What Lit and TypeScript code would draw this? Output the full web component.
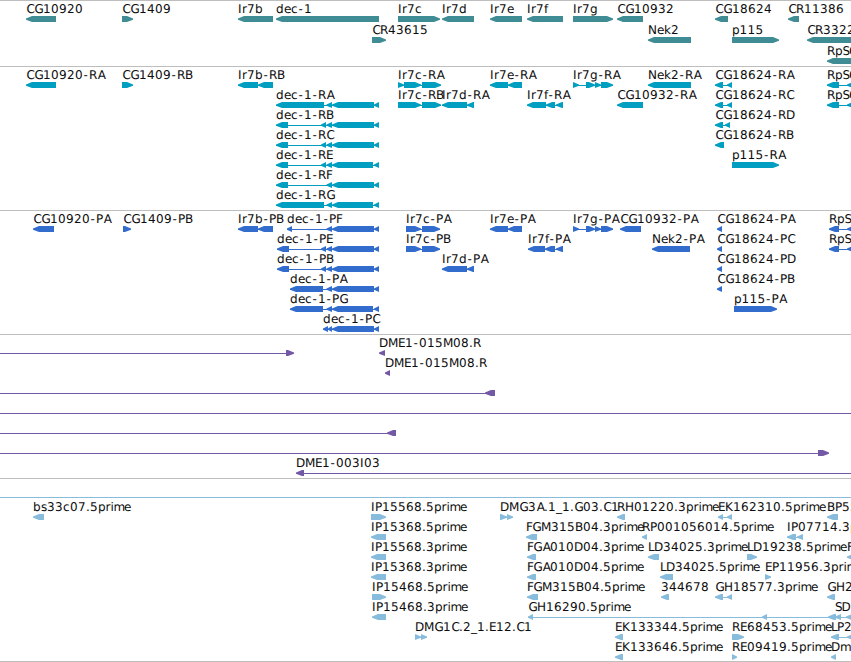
import { LitElement, html, svg, css } from "lit";
import { customElement, property } from "lit/decorators.js";

/** row, label, direction, blocks [start, end], optional connector span */
type Feature = [number, string, "L" | "R", number[][], number[]?];

interface Track {
  name: string;
  height: number;
  pitch: number;
  features: Feature[];
}

const WIDTH = 851;

// Glyph advances for the 12px label face.
const ADVANCE: Record<string, number> = {
  A: 8, B: 8, C: 8, D: 9, E: 7, F: 6, G: 9, H: 9, I: 4, K: 8, L: 6, M: 10, N: 9, P: 7, R: 8, S: 6.5,
  b: 8, c: 7, d: 8, e: 7, f: 4, g: 8, i: 3, k: 7, m: 10.5, p: 7.5, r: 5, s: 6, ".": 4, "-": 6, _: 6,
};

// Extra left bearing for the round and slanted capitals, and the centred hyphen.
const BEARING: Record<string, number> = { A: 0.75, C: 0.5, G: 0.5, "-": 0.5 };

const DEC_TAIL = [[326.5, 332], [332, 374], [374, 379]];
const DEC_TAIL_GAP = [[326.5, 332], [332, 373], [374, 379]];
const IR7G = [[573, 579], [586, 595], [595, 601], [601, 613]];

const TRACKS: Track[] = [
  {
    name: "gene", height: 66, pitch: 21,
    features: [
      [0, "CG10920", "L", [[26, 56]]],
      [0, "CG1409", "R", [[122, 133]]],
      [0, "Ir7b", "L", [[238, 273]]],
      [0, "dec-1", "L", [[276, 379]]],
      [0, "Ir7c", "R", [[398, 440]]],
      [0, "Ir7d", "L", [[442, 474]]],
      [0, "Ir7e", "L", [[490, 522]]],
      [0, "Ir7f", "L", [[527, 563]]],
      [0, "Ir7g", "R", [[573, 613]]],
      [0, "CG10932", "L", [[617, 643]]],
      [0, "CG18624", "L", [[715, 728]]],
      [0, "CR11386", "L", [[788, 799]]],
      [1, "CR43615", "R", [[372, 386]]],
      [1, "Nek2", "L", [[648, 691]]],
      [1, "p115", "R", [[732, 779]]],
      [1, "CR33222", "L", [[807, 870]]],
      [2, "RpS6", "L", [[827, 870]]],
    ],
  },
  {
    name: "transcript", height: 144, pitch: 20,
    features: [
      [0, "CG10920-RA", "L", [[26, 56]]],
      [0, "CG1409-RB", "R", [[122, 133]]],
      [0, "Ir7b-RB", "L", [[238, 258], [258, 273]]],
      [1, "dec-1-RA", "L", [[276, 324], ...DEC_TAIL]],
      [2, "dec-1-RB", "L", [[276, 288], [321, 326], ...DEC_TAIL]],
      [3, "dec-1-RC", "L", [[276, 288], [321, 326], ...DEC_TAIL]],
      [4, "dec-1-RE", "L", [[276, 288], [321, 326], ...DEC_TAIL_GAP]],
      [5, "dec-1-RF", "L", [[276, 288], ...DEC_TAIL]],
      [6, "dec-1-RG", "L", [[276, 324], ...DEC_TAIL_GAP]],
      [0, "Ir7c-RA", "R", [[398, 404], [404, 421], [422, 441]]],
      [1, "Ir7c-RB", "R", [[398, 421], [422, 441]]],
      [1, "Ir7d-RA", "L", [[442, 467], [467, 474]]],
      [0, "Ir7e-RA", "L", [[490, 508], [508, 522]]],
      [1, "Ir7f-RA", "L", [[527, 546], [546, 555], [556, 563]]],
      [0, "Ir7g-RA", "R", IR7G],
      [1, "CG10932-RA", "L", [[617, 643]]],
      [0, "Nek2-RA", "L", [[648, 691]]],
      [0, "CG18624-RA", "L", [[715, 723], [727, 732]]],
      [1, "CG18624-RC", "L", [[715, 723], [727, 732]]],
      [2, "CG18624-RD", "L", [[715, 723], [725, 730]]],
      [3, "CG18624-RB", "L", [[715, 724]]],
      [4, "p115-RA", "R", [[732, 779]]],
      [0, "RpS6-RB", "L", [[827, 839], [847, 870]]],
      [1, "RpS6-RA", "L", [[827, 839], [847, 870]]],
    ],
  },
  {
    name: "protein", height: 124, pitch: 20,
    features: [
      [0, "CG10920-PA", "L", [[33, 54]]],
      [0, "CG1409-PB", "R", [[123, 131]]],
      [0, "Ir7b-PB", "L", [[238, 258], [258, 273]]],
      [0, "dec-1-PF", "L", [[287, 292], ...DEC_TAIL]],
      [1, "dec-1-PE", "L", [[277, 289], [321, 326], ...DEC_TAIL]],
      [2, "dec-1-PB", "L", [[277, 289], [321, 326], ...DEC_TAIL]],
      [3, "dec-1-PA", "L", [[290, 323], ...DEC_TAIL]],
      [4, "dec-1-PG", "L", [[290, 323], ...DEC_TAIL_GAP]],
      [5, "dec-1-PC", "L", [[323, 328], [328, 332], [332, 374], [374, 379]]],
      [0, "Ir7c-PA", "R", [[406, 421], [422, 440]]],
      [1, "Ir7c-PB", "R", [[406, 421], [422, 440]]],
      [2, "Ir7d-PA", "L", [[442, 467], [467, 474]]],
      [0, "Ir7e-PA", "L", [[490, 508], [508, 522]]],
      [1, "Ir7f-PA", "L", [[528, 545], [545, 555], [556, 563]]],
      [0, "Ir7g-PA", "R", IR7G],
      [0, "CG10932-PA", "L", [[620, 641]]],
      [1, "Nek2-PA", "L", [[652, 690]]],
      [0, "CG18624-PA", "L", [[717, 722]]],
      [1, "CG18624-PC", "L", [[717, 722]]],
      [2, "CG18624-PD", "L", [[717, 722]]],
      [3, "CG18624-PB", "L", [[717, 722]]],
      [4, "p115-PA", "R", [[734, 777]]],
      [0, "RpS6-PB", "L", [[829, 839], [847, 870]]],
      [1, "RpS6-PA", "L", [[829, 839], [847, 870]]],
    ],
  },
  {
    name: "bac", height: 144, pitch: 20,
    features: [
      [0, "", "R", [[286, 294]], [0, 286]],
      [0, "DME1-015M08.R", "L", [[379, 385]]],
      [1, "DME1-015M08.R", "L", [[385, 390]]],
      [2, "", "L", [[485, 495]], [0, 486]],
      [3, "", "L", [], [0, WIDTH]],
      [4, "", "L", [[387, 396]], [0, 388]],
      [5, "", "R", [[818, 829]], [0, 818]],
      [6, "DME1-003I03", "L", [[296, 304]], [304, WIDTH]],
    ],
  },
  {
    name: "est", height: 183, pitch: 20,
    features: [
      [0, "", "L", [], [0, WIDTH]],
      [1, "bs33c07.5prime", "L", [[33, 44]]],
      [1, "IP15568.5prime", "R", [[371, 386]]],
      [1, "DMG3A.1_1.G03.C1", "R", [[500, 507], [507, 513]]],
      [1, "RH01220.3prime", "L", [[617, 625]]],
      [1, "EK162310.5prime", "L", [[718, 723], [727, 732]]],
      [1, "BP551284.5prime", "L", [[827, 838]]],
      [2, "IP15368.5prime", "L", [[371, 386]]],
      [2, "FGM315B04.3prime", "L", [[526, 537]]],
      [2, "RP001056014.5prime", "L", [[642, 647]]],
      [2, "IP07714.3prime", "L", [[787, 796], [797, 803]]],
      [3, "IP15568.3prime", "L", [[371, 386]]],
      [3, "FGA010D04.3prime", "L", [[527, 536]]],
      [3, "LD34025.3prime", "L", [[648, 659]]],
      [3, "LD19238.5prime", "R", [[747, 757]]],
      [3, "F", "L", [[847, 857]]],
      [4, "IP15368.3prime", "L", [[371, 386]]],
      [4, "FGA010D04.5prime", "L", [[527, 536]]],
      [4, "LD34025.5prime", "L", [[660, 673]]],
      [4, "EP11956.3prime", "R", [[765, 771]]],
      [5, "IP15468.5prime", "R", [[372, 386]]],
      [5, "FGM315B04.5prime", "L", [[527, 538]]],
      [5, "344678", "L", [[661, 669]]],
      [5, "GH18577.3prime", "L", [[715, 723], [727, 732]]],
      [5, "GH2", "L", [[827, 835]]],
      [6, "IP15468.3prime", "L", [[372, 386]]],
      [6, "GH16290.5prime", "L", [[528, 533], [762, 767]], [528, WIDTH]],
      [6, "", "L", [[828, 836]]],
      [6, "SD", "L", [[835, 841], [846, 860]]],
      [7, "DMG1C.2_1.E12.C1", "R", [[415, 421], [421, 427]]],
      [7, "EK133344.5prime", "L", [[615, 623]]],
      [7, "RE68453.5prime", "R", [[732, 744]]],
      [7, "LP2", "L", [[831, 839], [847, 860]]],
      [8, "EK133646.5prime", "L", [[615, 623]]],
      [8, "RE09419.5prime", "R", [[732, 737]]],
      [8, "Dm", "L", [[831, 836]]],
    ],
  },
];

function glyphPositions(text: string, x: number): string {
  const out: number[] = [];
  for (const ch of text) {
    out.push(x + (BEARING[ch] ?? 0));
    x += ADVANCE[ch] ?? 8;
  }
  return out.join(" ");
}

function blockPoints(a: number, b: number, dir: "L" | "R", y: number): string {
  const head = Math.min(6, b - a);
  return dir === "L"
    ? `${a},${y + 3.8} ${a},${y + 2.4} ${a + head},${y} ${b},${y} ${b},${y + 6} ${a + head},${y + 6}`
    : `${b},${y + 3.8} ${b},${y + 2.4} ${b - head},${y} ${a},${y} ${a},${y + 6} ${b - head},${y + 6}`;
}

@customElement("feature-track")
export class FeatureTrack extends LitElement {
  @property({ attribute: false }) track!: Track;

  static styles = css`
    :host { display: block; border-top: 1px solid #bebebe; box-sizing: border-box; }
    .canvas { display: block; overflow: hidden; }
    .label { font: 12px "DejaVu Sans", sans-serif; fill: #0c0c0c; text-rendering: geometricPrecision; }
    .gene { fill: #408c94; }
    .transcript { fill: #009ec0; }
    .protein { fill: #326ccc; }
    .bac { fill: #7358a6; }
    .est { fill: #87bcdc; }
  `;

  private feature([row, label, dir, blocks, span]: Feature) {
    const y = 15 + row * this.track.pitch;
    const link = span ?? (blocks.length > 1 ? [blocks[0][0], blocks[blocks.length - 1][1]] : null);
    return svg`
      ${link ? svg`<rect x=${link[0]} y=${y + 3} width=${link[1] - link[0]} height="1"></rect>` : null}
      ${blocks.map(([a, b]) => svg`<polygon points=${blockPoints(a, b, dir, y)}></polygon>`)}
      ${label ? svg`<text class="label" x=${glyphPositions(label, blocks[0][0])} y=${y - 3}>${label}</text>` : null}
    `;
  }

  render() {
    const { name, height, features } = this.track;
    return html`<svg class="canvas ${name}" width=${WIDTH} height=${height - 1}>
      ${features.map((f) => this.feature(f))}
    </svg>`;
  }
}

@customElement("app-root")
export class AppRoot extends LitElement {
  static styles = css`
    :host { display: block; width: 851px; height: 662px; background: #fff; overflow: hidden; }
    .panel { border-bottom: 1px solid #bebebe; }
  `;

  render() {
    return html`<div class="panel">
      ${TRACKS.map((t) => html`<feature-track .track=${t}></feature-track>`)}
    </div>`;
  }
}
